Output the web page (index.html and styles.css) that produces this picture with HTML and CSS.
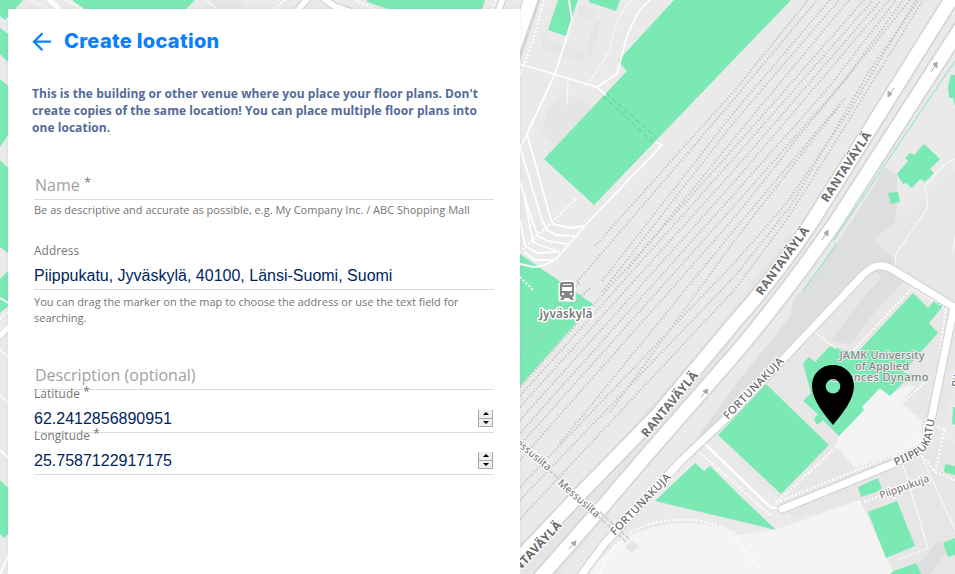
FILE: index.html
```html
<!DOCTYPE html>
<html lang="en">
<head>
<meta charset="utf-8">
<title>Create location</title>
<link rel="stylesheet" href="styles.css">
</head>
<body>
<svg class="map" viewBox="0 0 955 574" width="955" height="574" aria-label="Map">
  <rect width="955" height="574" fill="#eaeaea"/>
  <!-- land shading -->
  <g fill="#e5e5e5">
    <path d="M579 5L597 11L592 18L602 22L592 55L586 53L581 63L541 47L541 37L547 36L547 41L585 53L595 22L577 16Z"/>
    <path d="M562 95L580 98L592 108L592 140L555 145L541 131L547 111Z"/>
    <path d="M890 225L955 170V315L893 276L873 240Z" fill="#e7e7e7"/>
    <path d="M520 543L577 490L612 450L700 350L790 233L800 245L760 300L705 380L650 460L560 574H520Z"/>
    <path d="M808 275L874 270L955 317V385L934 450L790 508L735 460L782 360Z" fill="#e7e7e7"/>
    <path d="M785 509L945 440L955 445V574H884L858 500L795 519Z" fill="#e6e6e6"/>
    <path d="M205 9L212 0H236L246 9Z"/>
  </g>
  <path d="M885 167L897 175L897 205L895 222L873 240L893 258L906 280L880 305L850 345L832 340L875 276L866 270L735 408L695 441L735 385L790 317L794 298L803 290L850 224Z" fill="#dcdee0"/>
  <path d="M874 269L881 278L866 294L840 329L827 338L735 410L735 400L793 348Z" fill="#e7e7e7"/>
  <path d="M955 540L930 574H910L939 540L945 548Z" fill="#dcdee0"/>
  <g fill="#f4f4f4">
    <path d="M737 535L775 530L860 500L894 574H590C604 550 628 531 660 526C690 520 715 524 737 535Z"/>
    <path d="M863 404L878 388L895 398L922 420L921 445L855 468L835 445L838 438Z"/>
    <path d="M900 403L915 387L908 385L885 397Z"/>
  </g>
  <!-- railway tracks -->
  <g class="rail">
    <path d="M595 246L735 90L808 0M577 282L735 98L817 0M602 281L735 111L830 0M628 269L735 137L849 0M602 292L735 121L839 0"/>
    <path d="M520 387L735 147L864 0M520 396L735 157L873 0M520 407L735 169L881 0M520 420L735 181L889 0M520 433L735 193L830 86L896 0M520 445L735 205L845 80L903 0M520 460L735 217L800 135L910 0"/>
    <path d="M520 487L735 262L785 205L850 110L916 0M520 500L735 276L790 207L870 70L919 0M520 519L735 289L788 218L880 70L923 0M610 412L735 240L840 105M560 443L735 229L846 97"/>
  </g>
  <!-- buildings -->
  <g fill="#7be9b3">
    <path d="M558 0H578L573 14L566 36L548 30ZM589 0H620L616 11L589 2Z"/>
    <path d="M674 0H791L594 205L544 159L627 71L618 61Z"/>
    <path d="M520 254L593 304L520 386Z"/>
    <path d="M924 144L940 159L930 169L934 173L925 182L920 179L912 188L906 183L903 184L897 174L908 161L905 158L910 153L914 155ZM888 193L898 192L900 202L891 204ZM951 75H955V106L953 98L949 98L948 86Z"/>
    <path d="M913 293L928 308L934 301L943 306L929 323L938 333L919 354L903 373L912 374L890 396L880 388L862 407L864 410L839 436L823 420L817 425L814 419L818 414L803 401L811 393L803 363L809 357L815 362L830 346L856 354Z"/>
    <path d="M766 384L829 445L781 494L718 435ZM695 463L704 471L710 466L735 491L776 530L655 501Z"/>
    <path d="M858 487L878 478L882 490L861 497ZM868 512L897 501L915 546L886 558ZM894 571L916 563L921 574H890ZM943 543L955 538V555L948 557ZM945 464L955 466V475L944 472ZM953 407H955V425L952 423Z"/>
    <path d="M0 0H23L5 20L0 16ZM72 0H195L186 9H84ZM367 0H485L482 9H388L367 2ZM0 28L8 34V62L0 54ZM0 79L8 86V135L0 147ZM0 160L8 168V253L0 247ZM0 279L8 271V306L0 313ZM0 480L8 488V534L4 538L0 534Z"/>
  </g>
  <path d="M955 61L834 240M834 242L836 245L803 291" fill="none" stroke="#7be9b3"/>
  <!-- tracks over the platform -->
  <path d="M520 340L580 282M520 354L590 288" fill="none" stroke="#a9c3b3" stroke-width="1.8" stroke-dasharray="1.5 2"/>
  <!-- footpaths -->
  <g fill="none" stroke="#fff" stroke-width="1.8">
    <path d="M520 64L597 87L617 74L626 40Q636 10 650 0M569 0L572 20L555 74L527 134L520 148M527 134L551 220M520 148L542 220M520 182L532 220M597 87L606 95M655 142L662 145L591 219L556 259Q544 267 534 267L520 264"/>
    <path d="M551 220L553 224L570 228L584 226M542 220L547 230L556 235L575 236M532 220L538 236L548 241L567 244M525 200L533 242L542 246L560 252M520 220L525 246L538 253L556 252M524 252L535 260L553 260"/>
    <path d="M588 84L610 50Q615 14 633 0M568 80L567 105M955 159L945 164L925 186L928 207L896 254L895 266M903 465L928 548L897 560M920 453L955 530M953 255L955 235" stroke-width="1.2" stroke-opacity=".7"/>
    <path d="M704 443L770 507L782 509" stroke-width="2.5"/>
    <path d="M0 298Q5 301 8 303M0 367L8 375M0 450L8 458M0 574L8 556"/>
    <path d="M206 0L218 10" stroke-width="1"/>
    <g stroke-width="2" stroke-dasharray="2 2">
      <path d="M544 0L533 40L520 75M576 199L555 219L520 252M520 277L533 290M815 332L835 348M854 350L912 288L946 308L930 425L914 447L775 503L790 490L836 447M945 310L955 312M930 425L945 429L935 472L955 480M697 450L770 515M864 502L882 495M735 537L758 568M920 453L935 472M902 403L930 378M600 574C610 540 640 520 677 520Q705 518 735 533"/>
      <path d="M31 0L51 10M0 350L8 357M0 395L8 403M0 319L8 312M66 0L84 10M285 0L274 9M355 0L375 9M496 0L492 9"/>
    </g>
  </g>
  <path d="M606 93L657 138M603 96L653 142" fill="none" stroke="#65c79a" stroke-dasharray="5 3"/>
  <!-- road fragments around the panel -->
  <g fill="none">
    <path d="M48 -2L60 10M0 336L9 327" stroke="#fff" stroke-width="5" />
    <path d="M308 -2L297 11M320 -4L334 6L352 12M503 -2L498 12" stroke="#d5d5d5" stroke-width="8"/>
    <path d="M308 -2L297 11M320 -4L334 6L352 12M503 -2L498 12" stroke="#fff" stroke-width="5.5"/>
    <path d="M0 341L9 331M0 367L9 376" stroke="#d5d5d5"/>
  </g>
  <!-- main roads: casing then fill -->
  <path d="M511 60L533 -4" fill="none" stroke="#d5d5d5" stroke-width="17"/>
  <path d="M510 60L532 -4" fill="none" stroke="#fff" stroke-width="13"/>
  <g fill="none" stroke="#d5d5d5" stroke-linejoin="round">
    <path d="M957 -10L813 220Q777 275 735 322L658 414L582 492L510 568" stroke-width="16.5"/>
    <path d="M965 21L837 220Q785 295 735 354L645 457L605 504L538 580" stroke-width="16.5"/>
    <path d="M574 585L605 543L682 460L735 410L862 276Q876 260 892 269L960 311M782 509L895 463L922 448Q930 440 931 420L954 307" stroke-width="9.5" stroke-linecap="round"/>
  </g>
  <g fill="none" stroke="#fff" stroke-linejoin="round">
    <path d="M957 -10L813 220Q777 275 735 322L658 414L582 492L510 568M965 21L837 220Q785 295 735 354L645 457L605 504L538 580" stroke-width="13"/>
    <path d="M574 585L605 543L682 460L735 410L862 276Q876 260 892 269L960 311M782 509L895 463L922 448Q930 440 931 420L954 307" stroke-width="7" stroke-linecap="round"/>
  </g>
  <!-- pedestrian bridge -->
  <path d="M548 470L560 479M597 515L626 542M600 512L629 539" fill="none" stroke="#d0d0d0" stroke-width="2" stroke-dasharray="5 2"/>
  <path d="M632 540L639 546L631 553L625 547Z" fill="#e5e5e5"/>
  <!-- direction arrows -->
  <g fill="#aaa" stroke="#aaa" stroke-width="1">
    <path d="M894 88L889 95M892 94L888 97L888 91ZM931 72L936 64M933 64L937 62L937 68ZM822 240L827 232M824 233L828 230L828 236ZM701 397L707 390M703 391L708 389L707 394ZM569 549L575 542M571 543L576 541L575 546Z"/>
  </g>
  <!-- map labels -->
  <g class="road road-major">
    <text transform="translate(827.500 203) rotate(-57)" textLength="81">RANTAVÄYLÄ</text>
    <text transform="translate(762 296) rotate(-54)" textLength="81">RANTAVÄYLÄ</text>
    <text transform="translate(647 438) rotate(-50.500)" textLength="81">RANTAVÄYLÄ</text>
    <text transform="translate(507 585) rotate(-47)" textLength="81">RANTAVÄYLÄ</text>
  </g>
  <g class="road">
    <text transform="translate(615 536) rotate(-46)" textLength="81">FORTUNAKUJA</text>
    <text transform="translate(728 420) rotate(-46)" textLength="81">FORTUNAKUJA</text>
    <path id="piippukatu" d="M896 466L914 458Q929 451 932 436L938 400" fill="none"/>
    <text><textPath href="#piippukatu" textLength="66">PIIPPUKATU</textPath></text>
    <text transform="translate(959 388) rotate(-78)">Piippukatu</text>
    <text class="path-name" transform="translate(508 438) rotate(40)" textLength="52">Messusilta</text>
    <text class="path-name" transform="translate(557 484) rotate(41)" textLength="52">Messusilta</text>
    <text class="path-name" transform="translate(881 499) rotate(-20)" textLength="52">Piippukuja</text>
  </g>
  <g class="place">
    <text x="882" y="359" textLength="85">JAMK University</text>
    <text x="882" y="370" textLength="54">of Applied</text>
    <text x="880" y="381" textLength="97">Sciences Dynamo</text>
  </g>
  <g class="station">
    <path d="M560 284L563 282H571L574 284V300H560Z" stroke="#fff" stroke-width="3" fill="#fff" stroke-linejoin="round"/>
    <path fill="#858585" fill-rule="evenodd" d="M562 282H572Q574 282 574 285V295Q574 297 572 297L574 300H571L569 298H565L563 300H560L562 297Q560 297 560 295V285Q560 282 562 282ZM563 284V285H571V284ZM562 287V291H572V287ZM562 293V295H564V293ZM570 293V295H572V293Z"/>
    <text x="566" y="318" textLength="53">Jyväskylä</text>
  </g>
  <!-- location marker -->
  <path fill-rule="evenodd" d="M833 365C821 365 812 374 812 386C812 400 824 414 833 425C842 414 854 400 854 386C854 374 845 365 833 365ZM833 379A7.3 7.3 0 1 1 833 393.600A7.300 7.300 0 1 1 833 379Z"/>
</svg>

<main class="panel">
  <header class="panel-header">
    <svg class="back" width="20" height="20" viewBox="0 0 20 20"><path d="M19 10.700H2M10.500 2.200L2 10.700L10.500 19.200" fill="none" stroke="#0a80ff" stroke-width="2.300"/></svg>
    <h1>Create location</h1>
  </header>
  <p class="intro">This is the building or other venue where you place your floor plans. Don't create copies of the same location! You can place multiple floor plans into one location.</p>
  <form>
    <div class="field name">
      <div class="placeholder">Name <sup>*</sup></div>
      <div class="hint">Be as descriptive and accurate as possible, e.g. My Company Inc. / ABC Shopping Mall</div>
    </div>
    <div class="field address">
      <label>Address</label>
      <div class="value">Piippukatu, Jyväskylä, 40100, Länsi-Suomi, Suomi</div>
      <div class="hint">You can drag the marker on the map to choose the address or use the text field for searching.</div>
    </div>
    <div class="field description">
      <div class="placeholder">Description (optional)</div>
    </div>
    <div class="field coordinate">
      <label>Latitude <sup>*</sup></label>
      <div class="value">62.2412856890951<span class="spinner"><i class="up"></i><i class="down"></i></span></div>
    </div>
    <div class="field coordinate">
      <label>Longitude <sup>*</sup></label>
      <div class="value">25.7587122917175<span class="spinner"><i class="up"></i><i class="down"></i></span></div>
    </div>
  </form>
</main>
</body>
</html>
```
FILE: styles.css
```css
* { box-sizing: border-box; }
body {
  margin: 0;
  height: 574px;
  overflow: hidden;
  font-family: "Open Sans", sans-serif;
}
.map { position: absolute; left: 0; top: 0; }
.rail path { fill: none; stroke: #c4c4c4; stroke-width: 2; stroke-dasharray: 1.4 2; }
.map text { fill: #6b6b6b; stroke: #fff; stroke-width: 2.5px; stroke-linejoin: round; paint-order: stroke; font-family: "Noto Sans", sans-serif; }
.road text { font-size: 11px; font-weight: 500; }
.road-major text { font-size: 12px; font-weight: 700; }
.road .path-name { fill: #808080; font-size: 10.5px; }
.place text { fill: #85898a; stroke: #e9eeeb; stroke-width: 2px; text-anchor: middle; font-size: 11px; font-weight: 500; }
.station text { fill: #777; stroke-width: 3px; text-anchor: middle; font-size: 12px; font-weight: 600; }
.panel {
  position: relative;
  width: 512px;
  height: 565px;
  margin: 9px 0 0 8px;
  padding: 22px 26px 0 24px;
  background: #fff;
  box-shadow: 0 0 5px rgba(0, 0, 0, .06);
}
.panel-header { display: flex; align-items: center; height: 20px; gap: 12px; }
h1 { margin: 0; color: #0a80ff; font: 800 20px/20px Inter, sans-serif; letter-spacing: .32px; white-space: nowrap; }
.intro { margin: 34px 0 0; height: 51px; width: 460px; color: #536b98; font-size: 12px; font-weight: 700; line-height: 17px; letter-spacing: .045px; }
form { margin: 38px 0 0 2px; }
.field { color: #757575; font-size: 11px; }
.placeholder { height: 26px; padding-left: 1px; border-bottom: 1px solid #dcdcdc; color: #a1a1a1; font-size: 16px; line-height: 22px; }
sup { font-size: inherit; line-height: 0; vertical-align: 2px; }
.placeholder sup { color: #777; font-size: 13px; vertical-align: 4px; }
.hint { padding-top: 2px; line-height: 16px; }
.name { height: 69px; }
label { display: block; height: 16px; font-size: 11.8px; line-height: 15px; letter-spacing: .1px; }
.value { display: flex; justify-content: space-between; align-items: center; height: 31px; padding-top: 3px; border-bottom: 1px solid #dcdcdc; color: #001f5c; font: 16px/28px "Liberation Sans", sans-serif; }
.address { height: 121px; }
.address .hint { padding-top: 4px; }
.description { height: 26px; }
.coordinate { height: 42px; }
.coordinate label { height: 14px; line-height: 7px; }
.coordinate .value { height: 29px; padding-top: 1px; }
.spinner { display: flex; flex-direction: column; width: 15px; height: 17px; background: #efefef; border: 1px solid #aaa; border-top: 0; margin-right: 1px; }
.spinner i { flex: 1; display: grid; place-items: center; }
.spinner i::after { content: ""; border: 3px solid transparent; }
.spinner .up { border-bottom: 1px solid #aaa; }
.spinner .up::after { border-top: 0; border-bottom-color: #000; }
.spinner .down::after { border-bottom: 0; border-top-color: #000; }
```
